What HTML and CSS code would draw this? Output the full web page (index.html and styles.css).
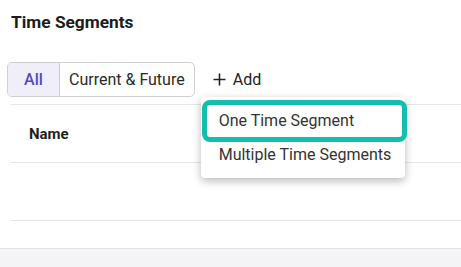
FILE: index.html
```html
<!DOCTYPE html>
<html>
<head>
    <meta charset="utf-8">
    <title>Time Segments</title>
    <link rel="stylesheet" href="styles.css">
</head>
<body>
<div class="page">
    <h1 class="title">Time Segments</h1>
    <div class="toolbar">
        <ul class="filter">
            <li class="active">All</li>
            <li>Current &amp; Future</li>
        </ul>
        <div class="add-wrap">
            <button class="add">
                <svg width="13" height="13" viewBox="0 0 13 13"><path d="M6.5 0.5v12M0.5 6.5h12" stroke="#222" stroke-width="1.6" fill="none"/></svg>
                <span>Add</span>
            </button>
            <ul class="menu">
                <li class="focus">One Time Segment</li>
                <li>Multiple Time Segments</li>
            </ul>
        </div>
    </div>
    <div class="table">
        <div class="row head"><span>Name</span></div>
        <div class="row"></div>
    </div>
</div>
<div class="footer"></div>
</body>
</html>
```

FILE: styles.css
```css
body {
    margin: 0;
    font-family: Roboto, "Liberation Sans", sans-serif;
    color: #222;
    background: #fff;
}

ul {
    margin: 0;
    padding: 0;
}

li {
    list-style: none;
    cursor: pointer;
}

.page {
    height: 248px;
    overflow: visible;
}

.title {
    margin: 0;
    padding: 12px 0 0 11px;
    font-size: 17.3px;
    line-height: 20px;
    font-weight: 700;
    color: #1c1c1c;
}

.toolbar {
    display: flex;
    align-items: center;
    margin-top: 30px;
    padding-left: 7px;
}

.filter {
    display: flex;
    height: 33px;
    border: 1px solid #cfcfd3;
    border-radius: 5px;
    overflow: hidden;
}

.filter li {
    line-height: 33px;
    font-size: 16px;
    padding: 0 9px 0 9px;
    color: #2a2a2a;
}

.filter li.active {
    width: 51px;
    padding: 0;
    text-align: center;
    font-weight: 500;
    background: #f0eff9;
    color: #5548c4;
    border-right: 1px solid #cfcfd3;
}

.add-wrap {
    position: relative;
    margin-left: 18px;
}

.add {
    display: flex;
    align-items: center;
    gap: 7px;
    border: 0;
    background: none;
    padding: 0;
    font-family: inherit;
    font-size: 16px;
    color: #222;
    cursor: pointer;
}

.menu {
    position: absolute;
    left: -12px;
    top: 27px;
    width: 204px;
    height: 81px;
    background: #fff;
    border-radius: 4px;
    box-shadow: 0 3px 8px rgba(0, 0, 0, 0.28);
    z-index: 2;
    padding-top: 3px;
    box-sizing: border-box;
}

.menu li {
    font-size: 16px;
    color: #333;
    padding-left: 18px;
    line-height: 25px;
}

.menu li.focus {
    margin: 0 -2px 0 1px;
    padding-left: 12px;
    line-height: 32px;
    border: 5px solid #12bfae;
    border-radius: 8px;
}

.table {
    margin: 7px 0 0 11px;
    border-top: 1px solid #e6e6e8;
}

.row {
    height: 57px;
    border-bottom: 1px solid #e6e6e8;
    display: flex;
    align-items: center;
}

.row.head span {
    padding-left: 18px;
    font-size: 15px;
    font-weight: 700;
    color: #1f1f1f;
}

.footer {
    height: 19px;
    background: #f4f4f6;
    border-top: 1px solid #e4e4e6;
}
```
